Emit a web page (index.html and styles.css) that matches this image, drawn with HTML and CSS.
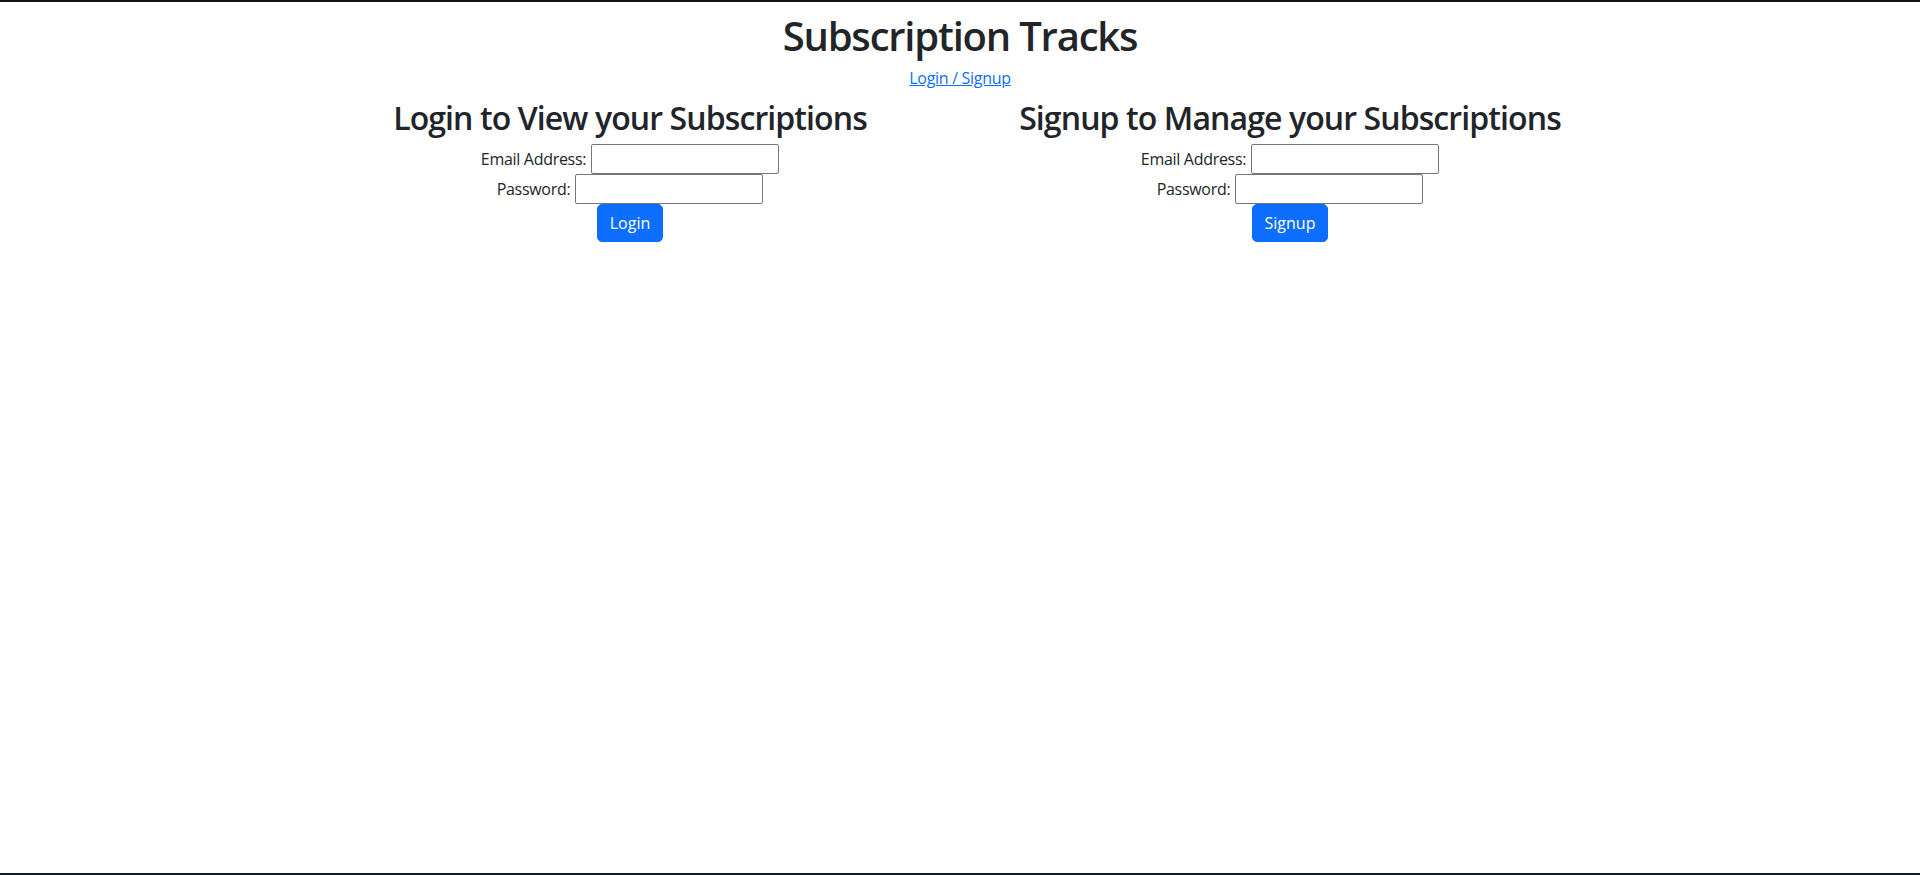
FILE: index.html
```html
<!DOCTYPE html>
<html lang="en">
<head>
<meta charset="utf-8">
<title>Subscription Tracks</title>
<link rel="stylesheet" href="styles.css">
</head>
<body>
<div class="topbar"></div>
<main class="page">
  <header class="masthead">
    <h1 class="title">Subscription Tracks</h1>
    <div class="navlink"><a href="#">Login / Signup</a></div>
  </header>
  <div class="columns">
    <section class="panel">
      <h2 class="panel-title">Login to View your Subscriptions</h2>
      <form class="form">
        <div class="field"><label for="le">Email Address:</label><input id="le" type="text" class="input"></div>
        <div class="field"><label for="lp">Password:</label><input id="lp" type="password" class="input"></div>
        <div class="actions"><button type="button" class="btn">Login</button></div>
      </form>
    </section>
    <section class="panel">
      <h2 class="panel-title">Signup to Manage your Subscriptions</h2>
      <form class="form">
        <div class="field"><label for="se">Email Address:</label><input id="se" type="text" class="input"></div>
        <div class="field"><label for="sp">Password:</label><input id="sp" type="password" class="input"></div>
        <div class="actions"><button type="button" class="btn">Signup</button></div>
      </form>
    </section>
  </div>
</main>
<div class="bottombar"></div>
</body>
</html>
```
FILE: styles.css
```css
* { box-sizing: border-box; }
html, body { height: 100%; }
body {
  margin: 0;
  font-family: "Open Sans", "Noto Sans", sans-serif;
  font-size: 16px;
  line-height: 1.5;
  color: #212529;
  background: #fff;
  display: flex;
  flex-direction: column;
  min-height: 100vh;
  letter-spacing: -0.3px;
}
.topbar { height: 2px; background: #0f1719; flex: none; }
.bottombar { height: 2px; background: #0c1f2b; flex: none; }
.page { flex: 1; }
.masthead { text-align: center; }
.title {
  margin: 10px 0 6px;
  font-size: 40px;
  font-weight: 600;
  line-height: 1.2;
  letter-spacing: -1.2px;
}
.navlink a { color: #0d6efd; text-decoration: underline; }
.columns {
  width: 1320px;
  margin: 9px auto 0;
  display: grid;
  grid-template-columns: 1fr 1fr;
}
.panel { text-align: center; padding: 0 12px; }
.panel-title {
  margin: 0 0 7px;
  font-size: 32px;
  font-weight: 600;
  line-height: 1.2;
  letter-spacing: -0.9px;
}
.form { display: flex; flex-direction: column; align-items: center; }
.field {
  display: flex;
  align-items: center;
  justify-content: center;
  gap: 5px;
  height: 30px;
}
.input {
  width: 188px;
  height: 30px;
  border: 1px solid #767676;
  border-radius: 2px;
  padding: 2px 3px;
  font: inherit;
  background: #fff;
}
.actions { display: flex; justify-content: center; }
.btn {
  font: inherit;
  color: #fff;
  background: #0d6efd;
  border: 1px solid #0d6efd;
  border-radius: 5px;
  padding: 6px 12px;
  line-height: 24px;
  cursor: pointer;
}
```
